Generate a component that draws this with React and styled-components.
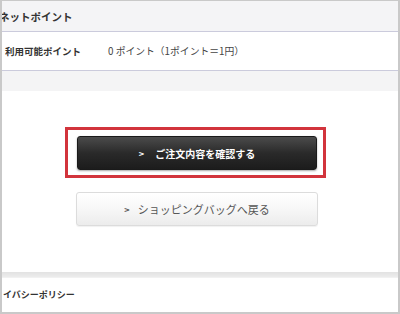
import React from "react";
import styled, { createGlobalStyle } from "styled-components";

const Global = createGlobalStyle`
  html, body { margin: 0; padding: 0; background: #fff; }
  body { width: 400px; height: 314px; overflow: hidden; }
  * { box-sizing: border-box; }
`;

const Frame = styled.div`
  width: 400px;
  height: 314px;
  border: 2px solid #c9c9c9;
  border-top-width: 1px;
  display: flex;
  flex-direction: column;
  overflow: hidden;
  font-family: "Noto Sans CJK JP", "Noto Sans", sans-serif;
  color: #333;
  background: #fff;
`;

const SectionHead = styled.div`
  height: 31px;
  flex: none;
  display: flex;
  align-items: center;
  background: #f4f4f6;
  border-bottom: 1px solid #cbcbdc;
`;

const HeadTitle = styled.span`
  margin-left: -3px;
  font-size: 10.5px;
  font-weight: 700;
  color: #333;
`;

const Row = styled.div`
  height: 39px;
  flex: none;
  display: flex;
  align-items: center;
  border-bottom: 1px solid #cbcbdc;
  font-size: 9.5px;
`;

const Label = styled.span`
  width: 106px;
  padding-left: 3px;
  font-weight: 700;
  color: #333;
`;

const Value = styled.span`
  font-size: 9.8px;
  color: #444;
`;

const Band = styled.div`
  height: ${(p) => p.$h}px;
  flex: none;
  background: ${(p) => p.$bg};
`;

const Actions = styled.div`
  flex: 1;
  display: flex;
  flex-direction: column;
  align-items: flex-start;
  padding: 36px 0 0 63px;
`;

const Highlight = styled.div`
  width: 261px;
  height: 51px;
  border: 3px solid #d2343c;
  padding: 6px 6px 5px 9px;
  display: flex;
`;

const Button = styled.button`
  width: ${(p) => (p.$primary ? 240 : 242)}px;
  height: 34px;
  margin: ${(p) => (p.$primary ? "0" : "14px 0 0 11px")};
  display: flex;
  align-items: center;
  justify-content: center;
  gap: ${(p) => (p.$primary ? 11 : 8)}px;
  border-radius: 3px;
  font-family: "Noto Sans CJK JP", "Noto Sans", sans-serif;
  font-size: ${(p) => (p.$primary ? 10 : 11)}px;
  font-weight: ${(p) => (p.$primary ? 700 : 400)};
  cursor: pointer;
  padding: 0;
  color: ${(p) => (p.$primary ? "#fff" : "#555")};
  border: 1px solid ${(p) => (p.$primary ? "#1a1a1a" : "#dcdcdc")};
  background: ${(p) =>
    p.$primary
      ? "linear-gradient(#4b4b4b, #2a2a2a 50%, #1c1c1c)"
      : "linear-gradient(#ffffff, #f7f7f7 50%, #ececec)"};
  box-shadow: ${(p) =>
    p.$primary ? "0 1px 2px rgba(0,0,0,0.35)" : "0 1px 1px rgba(0,0,0,0.06)"};
`;

const Chevron = styled.span`
  font-size: 9px;
  font-weight: 700;
  transform: scaleY(0.9);
`;

const Footer = styled.div`
  height: 35px;
  flex: none;
  display: flex;
  align-items: center;
  padding-left: 1px;
  padding-bottom: 2px;
  font-size: 9px;
  font-weight: 700;
  color: #333;
  border-top: 1px solid #f1f1f1;
`;

export default function App() {
  return (
    <>
      <Global />
      <Frame>
        <SectionHead>
          <HeadTitle>ネットポイント</HeadTitle>
        </SectionHead>
        <Row>
          <Label>利用可能ポイント</Label>
          <Value>0 ポイント（1ポイント＝1円）</Value>
        </Row>
        <Band $h={20} $bg="#f4f4f5" />
        <Actions>
          <Highlight>
            <Button $primary>
              <Chevron>&gt;</Chevron>
              <span>ご注文内容を確認する</span>
            </Button>
          </Highlight>
          <Button>
            <Chevron>&gt;</Chevron>
            <span>ショッピングバッグへ戻る</span>
          </Button>
        </Actions>
        <Band $h={5} $bg="linear-gradient(#e2e2e2, #ececec)" />
        <Footer>イバシーポリシー</Footer>
      </Frame>
    </>
  );
}
